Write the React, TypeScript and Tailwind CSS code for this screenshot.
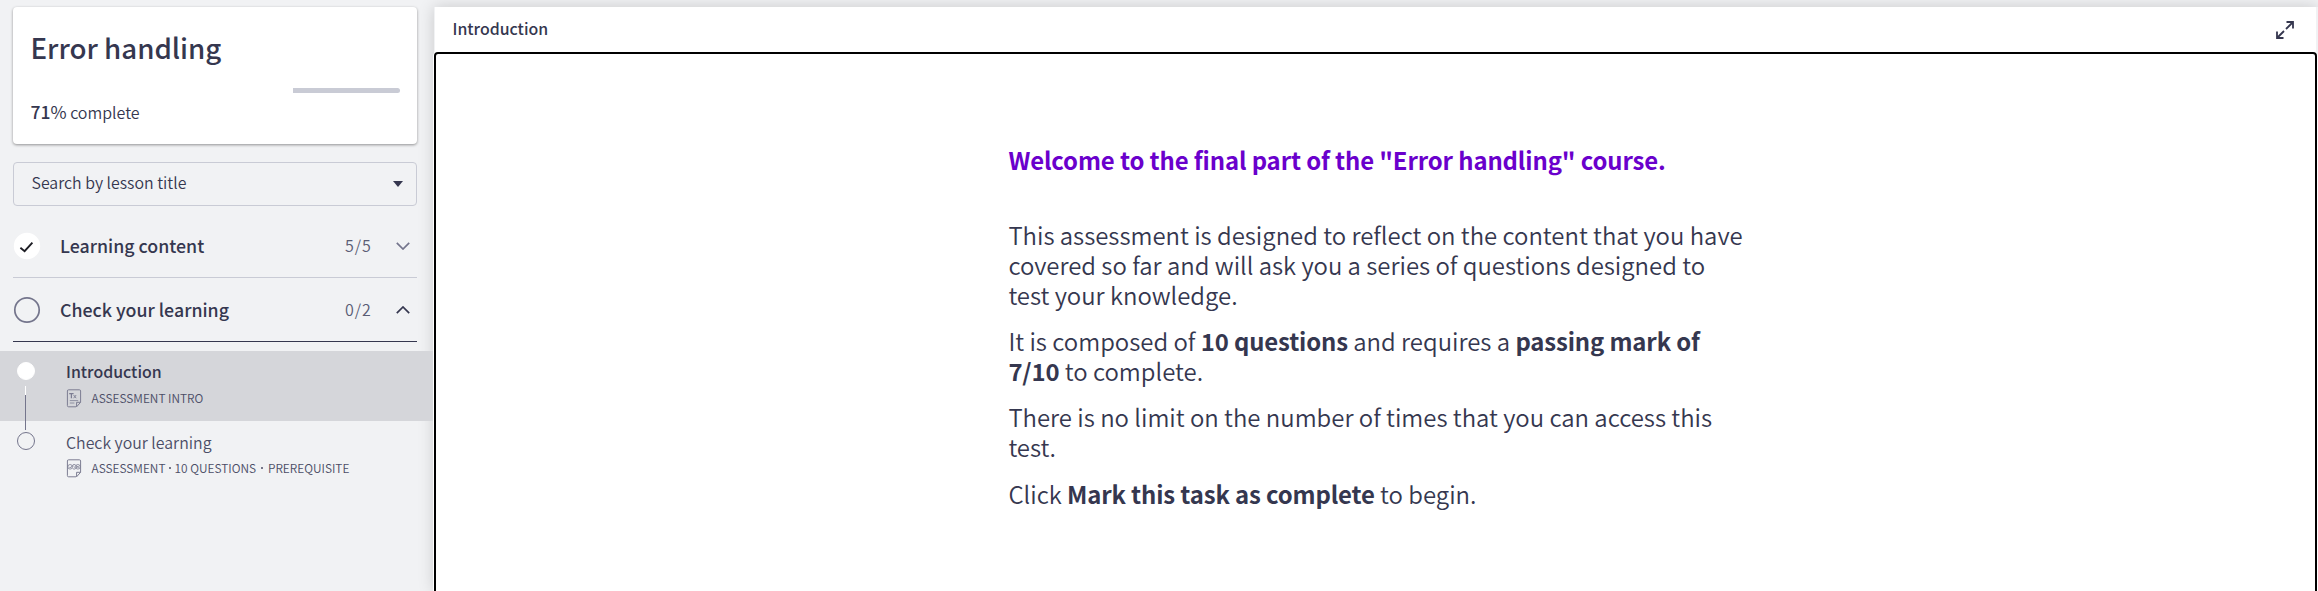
import type { ReactNode } from "react";

function DocIcon({ children }: { children: ReactNode }) {
  return (
    <svg width="16" height="19" viewBox="0 0 16 19" fill="none" stroke="#7c7d92" className="shrink-0">
      <path d="M10 17.8H2.6A1.2 1.2 0 0 1 1.4 16.6V2A1.2 1.2 0 0 1 2.6.8h10.8A1.2 1.2 0 0 1 14.6 2v11.3L10.6 17.8v-4.5h4" />
      {children}
    </svg>
  );
}

function TextDocIcon() {
  return (
    <DocIcon>
      <path d="M3.2 4.6h4.4M5.4 4.6v4.6" strokeWidth="1.2" />
      <path d="M7.6 6l2.6 3.2M10.2 6L7.6 9.2" strokeWidth="0.9" />
      <path d="M3.8 11.6h8.4M3.8 14h4.6" strokeWidth="0.8" />
    </DocIcon>
  );
}

function QuizDocIcon() {
  return (
    <DocIcon>
      <g strokeWidth="0.8">
        <circle cx="4.1" cy="7.8" r="2.3" />
        <circle cx="11.9" cy="7.8" r="2.3" />
        <path d="M6.4 6.4a2.3 2.3 0 1 1 0 2.8M3 7.8l1 1 3.2-2.4M10.9 6.8l2 2M12.9 6.8l-2 2M7.4 7l1.6 1.6" />
      </g>
    </DocIcon>
  );
}

function Section(props: { title: string; count: string; done?: boolean; open?: boolean }) {
  const { title, count, done, open } = props;
  return (
    <div
      className={`mr-4 ml-[13px] flex h-16 items-center border-b ${open ? "border-[#35374f]" : "border-[#c9cbd5]"}`}
    >
      <svg width="28" height="28" viewBox="0 0 28 28" fill="none" className="shrink-0">
        {done ? (
          <>
            <circle cx="14" cy="14" r="13.2" fill="#fff" />
            <path d="M7.4 15.8l4.2 3.4 7.8-8.6" stroke="#1d1d24" strokeWidth="1.9" />
          </>
        ) : (
          <circle cx="14" cy="14" r="12.2" stroke="#74758c" strokeWidth="1.7" />
        )}
      </svg>
      <span className="ml-[19px] flex-1 pb-px text-[17.8px] leading-6 font-medium whitespace-nowrap">{title}</span>
      <span className="w-[27px] pb-px text-[16px] leading-6 font-[350] tracking-[1px] text-[#5a5c74]">{count}</span>
      <svg width="14" height="8" viewBox="0 0 14 8" fill="none" strokeWidth="1.7" className="mr-[7px] ml-6">
        {open ? <path d="M.8 7.2L7 1l6.2 6.2" stroke="#35374f" /> : <path d="M.8.8L7 7 13.2.8" stroke="#74758c" />}
      </svg>
    </div>
  );
}

function Dot({ wide }: { wide?: boolean }) {
  return (
    <span className={`flex justify-center ${wide ? "w-[12px]" : "w-[9px]"}`}>
      <span className="size-[1.6px] rounded-full bg-[#4b4d66]" />
    </span>
  );
}

function Lesson(props: { title: string; icon: ReactNode; active?: boolean; children: ReactNode }) {
  const { title, icon, active, children } = props;
  return (
    <div className={`relative flex h-[70px] pl-[17px] ${active ? "bg-[#d5d6da]" : ""}`}>
      <span
        className={`mt-[11px] size-[18px] shrink-0 rounded-full border ${active ? "border-white bg-white" : "border-[#74758c]"}`}
      />
      {active && (
        <span className="absolute top-[35px] left-[25px] z-10 h-[44px] w-px bg-[#74758c]">
          <span className="block h-[9px] w-px bg-white" />
        </span>
      )}
      <div className={`ml-[31px] ${active ? "pt-[9px]" : "pt-2.5"}`}>
        <div
          className={`text-[15.9px] leading-6 whitespace-nowrap ${active ? "font-medium" : "font-[350] text-[#4b4d66]"}`}
        >
          {title}
        </div>
        <div className={`flex items-center gap-[9.5px] ${active ? "mt-1" : "mt-[3px]"}`}>
          {icon}
          <div className="flex items-center text-[11.9px] leading-5 font-[350] whitespace-nowrap text-[#4b4d66]">
            {children}
          </div>
        </div>
      </div>
    </div>
  );
}

export default function App() {
  return (
    <div className="flex h-[591px] overflow-hidden bg-[#f1f2f4] font-['Noto_Sans_CJK_JP',sans-serif] text-[#35374f]">
      <aside className="w-[433px] shrink-0 pt-[7px]">
        <div className="mr-4 ml-[13px] h-[137px] rounded bg-white pt-5 pr-[17px] pl-[17.5px] shadow-[0_1px_3px_rgba(0,0,0,0.4)]">
          <h1 className="text-[27.7px] leading-10 font-medium whitespace-nowrap">Error handling</h1>
          <div className="mt-[21px] flex h-[5px] justify-end">
            <div className="w-[107px] rounded-r-full bg-[#c9cbd5]" />
          </div>
          <p className="mt-[7px] text-[16px] leading-6 font-[350]">
            <span className="text-[17.5px] font-medium">71</span>
            <span className="text-[17.5px] font-normal">%</span> complete
          </p>
        </div>
        <div className="mr-4 ml-[13px] mt-[18px] flex h-11 items-center justify-between rounded border border-[#c9cbd5] pr-[13px] pl-[17.5px]">
          <span className="pb-[3px] text-[15.9px] leading-6 font-[350]">Search by lesson title</span>
          <svg width="10" height="6" viewBox="0 0 10 6" fill="#35374f">
            <path d="M0 0h10L5 6z" />
          </svg>
        </div>
        <div className="h-2" />
        <Section title="Learning content" count="5/5" done />
        <Section title="Check your learning" count="0/2" open />
        <div className="h-[9px]" />
        <Lesson title="Introduction" icon={<TextDocIcon />} active>
          <span>ASSESSMENT INTRO</span>
        </Lesson>
        <Lesson title="Check your learning" icon={<QuizDocIcon />}>
          <span>ASSESSMENT</span>
          <Dot />
          <span>10 QUESTIONS</span>
          <Dot wide />
          <span>PREREQUISITE</span>
        </Lesson>
      </aside>
      <main className="mt-[7px] ml-px flex flex-1 flex-col shadow-[0_0_15px_rgba(0,0,0,0.17)]">
        <header className="mr-[2px] ml-px flex h-[45px] shrink-0 items-center justify-between bg-white pr-[22px] pl-[17.5px]">
          <span className="pb-0.5 text-[15.9px] leading-6 font-medium">Introduction</span>
          <svg width="18" height="18" viewBox="0 0 18 18" fill="none" stroke="#35374f" strokeWidth="1.8">
            <path d="M10.5 1H17v6.5M17 1l-7 7M7.5 17H1v-6.5M1 17l7-7" />
          </svg>
        </header>
        <section className="mr-px h-[560px] shrink-0 rounded border-2 border-black bg-white pt-[91px] pl-[572.4px] shadow-[0_0_0_1px_#fff]">
          <div className="text-[23.9px] leading-[29.9px] font-[350] whitespace-nowrap [&_b]:font-bold [&_b]:tracking-[-0.13px]">
            <h2 className="mb-[45px] font-bold tracking-[-0.11px] text-[#6a00cc]">
              Welcome to the final part of the "Error handling" course.
            </h2>
            <p className="mb-[16.5px]">
              This assessment is designed to reflect on the content that you have
              <br />
              covered so far and will ask you a series of questions designed to
              <br />
              test your knowledge.
            </p>
            <p className="mb-[16.5px]">
              It is composed of <b>10 questions</b> and requires a <b>passing mark of</b>
              <br />
              <b>7/10</b> to complete.
            </p>
            <p className="mb-[16.5px]">
              There is no limit on the number of times that you can access this
              <br />
              test.
            </p>
            <p>
              Click <b>Mark this task as complete</b> to begin.
            </p>
          </div>
        </section>
      </main>
    </div>
  );
}
